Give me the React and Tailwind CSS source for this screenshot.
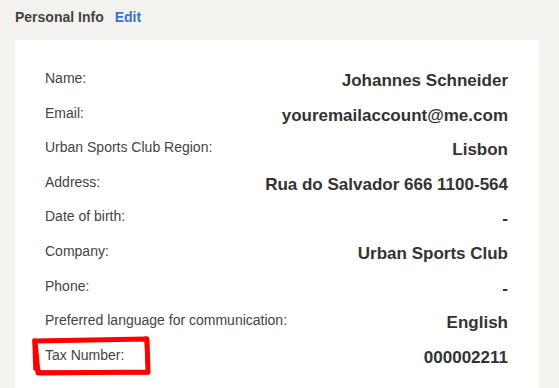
import React from "react";

const rows = [
  ["Name:", "Johannes Schneider"],
  ["Email:", "youremailaccount@me.com"],
  ["Urban Sports Club Region:", "Lisbon"],
  ["Address:", "Rua do Salvador 666 1100-564"],
  ["Date of birth:", "-"],
  ["Company:", "Urban Sports Club"],
  ["Phone:", "-"],
  ["Preferred language for communication:", "English"],
  ["Tax Number:", "000002211"],
];

export default function App() {
  return (
    <div
      className="w-[559px] h-[388px] overflow-hidden bg-[#f3f2ef] pl-[15px] pr-[20px]"
      style={{ fontFamily: '"Liberation Sans", Arial, sans-serif' }}
    >
      <div className="h-[40px] flex items-center gap-[11px] pb-[6px] text-[14px] font-bold">
        <span className="text-[#444]">Personal Info</span>
        <span className="text-[#3a6fd8]">Edit</span>
      </div>
      <div className="relative bg-white h-[400px] pt-[29px] pl-[30px] pr-[31px]">
        {rows.map(([label, value], i) => (
          <div key={i} className="h-[34.6px] flex justify-between items-start">
            <span className="text-[14px] text-[#444] leading-[18px]">{label}</span>
            <span className="text-[17px] font-bold text-[#333] leading-[20px] mt-[2px]">{value}</span>
          </div>
        ))}
        <svg
          className="absolute left-[16px] top-[295px]"
          width="122"
          height="42"
          viewBox="0 0 122 42"
        >
          <g fill="none" stroke="#f00" strokeLinejoin="round" strokeLinecap="round">
            <path d="M4 6 L116 4 L117 37 L7 38 Z" strokeWidth="5" />
            <path d="M3 5 L4 34 M8 37 L117 38 M115 3 L117 36" strokeWidth="3.5" />
          </g>
        </svg>
      </div>
    </div>
  );
}
